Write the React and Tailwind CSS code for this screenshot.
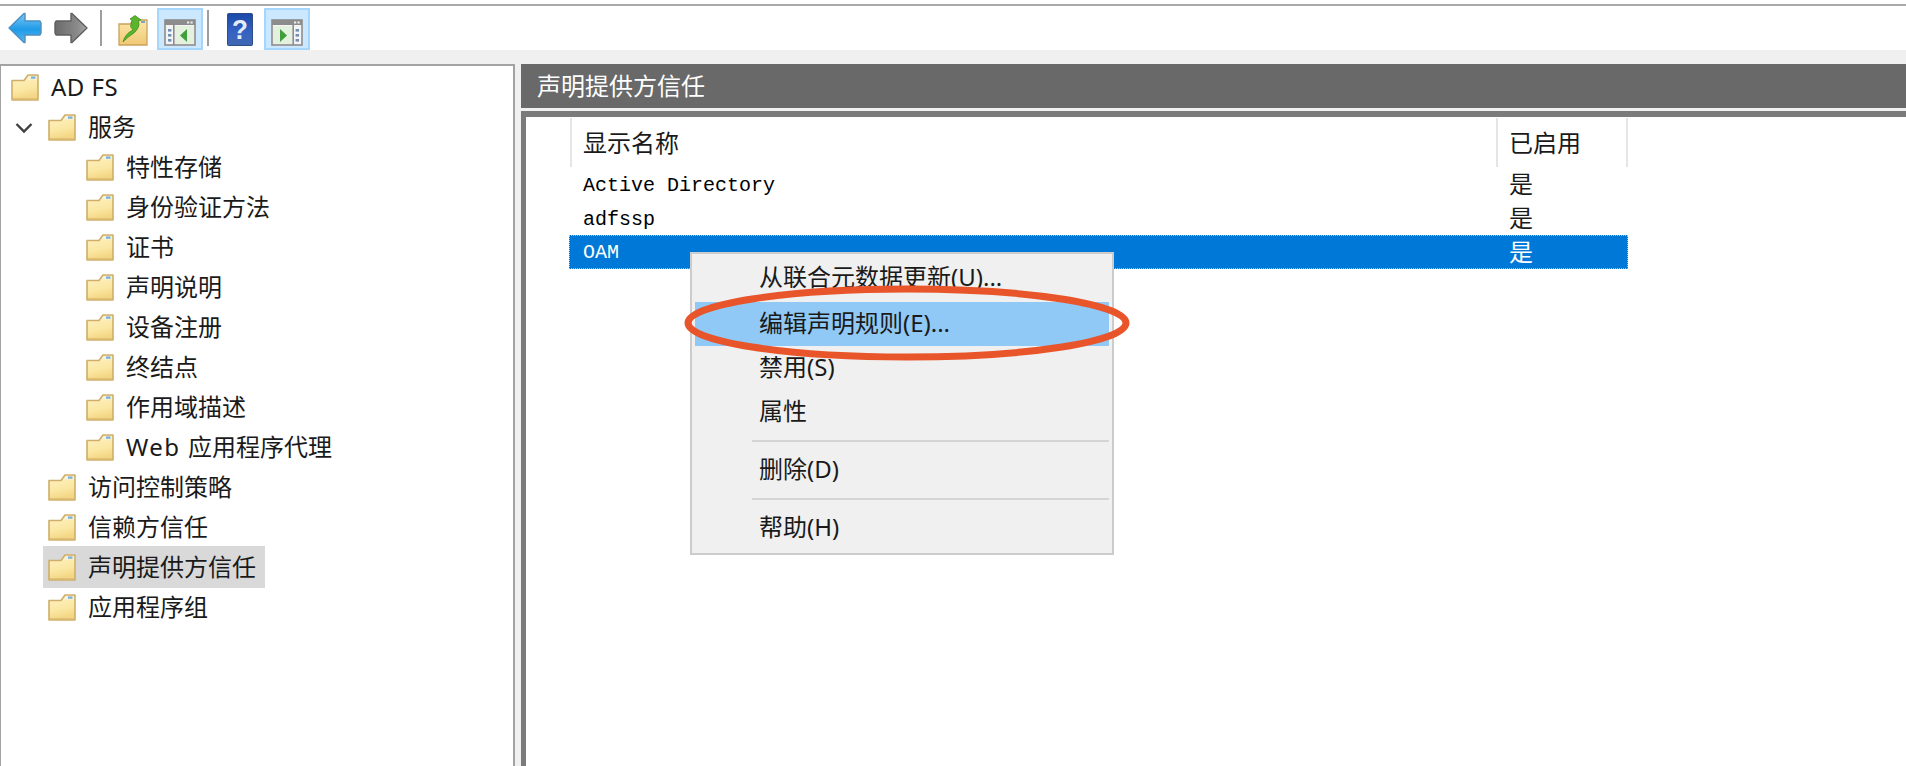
import React from "react";

const cjk = "font-['Noto_Sans','Noto_Sans_CJK_SC',sans-serif]";

function Folder() {
  return (
    <svg width="28" height="27" viewBox="0 0 28 27" className="shrink-0">
      <defs>
        <linearGradient id="fold" x1="0" y1="0" x2="0.25" y2="1">
          <stop offset="0" stopColor="#fdf3c4" />
          <stop offset="0.65" stopColor="#fbe7a3" />
          <stop offset="1" stopColor="#f3d583" />
        </linearGradient>
      </defs>
      <path d="M1 6.5 L13 6.5 L17 1 L27 1 L27 26 L1 26 Z" fill="url(#fold)" stroke="#cfae69" strokeWidth="1.6" strokeLinejoin="round" />
      <path d="M18 2 L26 2 L26 5.5 L15.5 5.5 Z" fill="#f6f1df" />
      <rect x="20" y="2.4" width="4.5" height="2.4" fill="#7fb3d8" />
      <path d="M2 25 L26 25" stroke="#d9b96f" strokeWidth="1.4" />
    </svg>
  );
}

function TreeRow({ level, label, selected, chevron }) {
  const pad = level === 0 ? "pl-[10px]" : level === 1 ? "pl-[47px]" : "pl-[85px]";
  return (
    <div className={`relative flex h-10 items-center ${pad}`}>
      {chevron && (
        <svg width="20" height="14" viewBox="0 0 20 14" className="absolute left-[13px] top-[14px]">
          <path d="M2.5 3 L10 10.5 L17.5 3" fill="none" stroke="#404040" strokeWidth="2.4" />
        </svg>
      )}
      <div className={`flex h-[42px] items-center gap-[12px] ${selected ? "-ml-[5px] bg-[#d9d9d9] pl-[5px] pr-[9px]" : ""}`}>
        <Folder />
        <span className="text-[24px] leading-none whitespace-nowrap text-[#1a1a1a]">{label}</span>
      </div>
    </div>
  );
}

function BackArrow() {
  return (
    <svg width="34" height="32" viewBox="0 0 34 32">
      <defs>
        <linearGradient id="back" x1="0" y1="0" x2="0" y2="1">
          <stop offset="0" stopColor="#7cc7f5" />
          <stop offset="0.55" stopColor="#1f9be8" />
          <stop offset="1" stopColor="#59b6ee" />
        </linearGradient>
      </defs>
      <path d="M1 16 L16 1.5 L17 1.5 L17 9 L32 9 L33 11 L33 21 L32 23 L17 23 L17 30.5 L16 30.5 Z" fill="url(#back)" stroke="#4c8fc0" strokeWidth="1.4" strokeLinejoin="round" />
    </svg>
  );
}

function ForwardArrow() {
  return (
    <svg width="34" height="32" viewBox="0 0 34 32">
      <defs>
        <linearGradient id="fwd" x1="0" y1="0" x2="1" y2="0">
          <stop offset="0" stopColor="#6b6b6b" />
          <stop offset="0.7" stopColor="#8a8a8a" />
          <stop offset="1" stopColor="#a8a8a8" />
        </linearGradient>
      </defs>
      <path d="M33 16 L18 1.5 L17 1.5 L17 9 L2 9 L1 11 L1 21 L2 23 L17 23 L17 30.5 L18 30.5 Z" fill="url(#fwd)" stroke="#5f5f5f" strokeWidth="1.4" strokeLinejoin="round" />
    </svg>
  );
}

function UpFolder() {
  return (
    <svg width="30" height="31" viewBox="0 0 30 31">
      <defs>
        <linearGradient id="upf" x1="0" y1="0" x2="0" y2="1">
          <stop offset="0" stopColor="#fbe7ab" />
          <stop offset="1" stopColor="#f0c874" />
        </linearGradient>
      </defs>
      <path d="M1 9 L12 9 L16 5 L29 5 L29 30 L1 30 Z" fill="url(#upf)" stroke="#c9a35b" strokeWidth="1.3" />
      <rect x="23" y="6" width="4" height="2" fill="#6fa8d0" />
      <path d="M5 27 C7 20 11 17 15 15 L12.5 11.5 L14 5 L12 4 L17 0.5 L23 5 L20.5 5.5 L21 10 C20 14 17 18 13 20 C10 22 7 25 5 27 Z" fill="#58b52c" stroke="#3f8f1e" strokeWidth="0.8" />
    </svg>
  );
}

function ConsolePane({ side }) {
  const left = side === "left";
  return (
    <svg width="32" height="27" viewBox="0 0 32 27">
      <rect x="1" y="1" width="30" height="25" fill="#f4f4f4" stroke="#8c8c8c" strokeWidth="1.6" />
      <rect x="1" y="1" width="30" height="5" fill="#8c8c8c" />
      <rect x="23" y="2.5" width="2.2" height="2" fill="#eeeeee" />
      <rect x="26.5" y="2.5" width="2.2" height="2" fill="#eeeeee" />
      {left ? (
        <g>
          <rect x="9" y="6" width="1.6" height="20" fill="#8c8c8c" />
          <rect x="4" y="10" width="3.4" height="2.6" fill="#6f90b4" />
          <rect x="4" y="15" width="3.4" height="2.6" fill="#6f90b4" />
          <rect x="4" y="20" width="3.4" height="2.6" fill="#6f90b4" />
          <rect x="11" y="7" width="19" height="18" fill="#e4f1df" />
          <path d="M23 10 L23 23 L16 16.5 Z" fill="#3f9f3a" />
        </g>
      ) : (
        <g>
          <rect x="21.4" y="6" width="1.6" height="20" fill="#8c8c8c" />
          <rect x="24.6" y="10" width="3.4" height="2.6" fill="#6f90b4" />
          <rect x="24.6" y="15" width="3.4" height="2.6" fill="#6f90b4" />
          <rect x="24.6" y="20" width="3.4" height="2.6" fill="#6f90b4" />
          <rect x="2" y="7" width="19" height="18" fill="#e4f1df" />
          <path d="M9 10 L9 23 L16 16.5 Z" fill="#3f9f3a" />
        </g>
      )}
    </svg>
  );
}

function HelpIcon() {
  return (
    <svg width="26" height="33" viewBox="0 0 27 33" preserveAspectRatio="none">
      <defs>
        <linearGradient id="hlp" x1="0" y1="0" x2="0" y2="1">
          <stop offset="0" stopColor="#1b48a8" />
          <stop offset="0.6" stopColor="#3564c4" />
          <stop offset="1" stopColor="#4068b0" />
        </linearGradient>
      </defs>
      <rect x="0.5" y="0.5" width="26" height="32" rx="1" fill="url(#hlp)" stroke="#2b4a86" />
      <text x="13.5" y="26" textAnchor="middle" fontFamily="Liberation Sans" fontWeight="700" fontSize="27" fill="#e6ecfa">?</text>
    </svg>
  );
}

function ToolButton({ children }) {
  return (
    <div className="flex h-[42px] w-[46px] items-end justify-center border-2 border-[#a6d6fb] bg-[#cce8ff] pb-[2px]">
      {children}
    </div>
  );
}

function Sep() {
  return <div className="h-[36px] w-[2px] bg-[#9e9e9e]" />;
}

function MenuItem({ label, active, extra = "" }) {
  return (
    <div className={`flex h-11 items-center pb-[2px] text-[24px] leading-none whitespace-nowrap text-[#1a1a1a] ${active ? "mx-[3px] pl-[64px] bg-[#90c8f6]" : "pl-[67px]"} ${extra}`}>
      {label}
    </div>
  );
}

function MenuSep() {
  return (
    <div className="flex h-[14px] items-center pl-[60px] pr-[3px]">
      <div className="h-[2px] w-full bg-[#d4d4d4]" />
    </div>
  );
}

const tree = [
  "特性存储",
  "身份验证方法",
  "证书",
  "声明说明",
  "设备注册",
  "终结点",
  "作用域描述",
];

export default function App() {
  return (
    <div className={`relative flex h-[766px] w-[1906px] flex-col overflow-hidden bg-white ${cjk}`}>
      {/* top rule */}
      <div className="h-1 bg-white" />
      <div className="h-[2px] bg-[#a9a9a9]" />

      {/* toolbar */}
      <div className="flex h-[44px] items-center bg-white pl-[8px]">
        <BackArrow />
        <div className="ml-[12px]"><ForwardArrow /></div>
        <div className="ml-[12px]"><Sep /></div>
        <div className="ml-[16px] mt-[4px]"><UpFolder /></div>
        <div className="ml-[9px] mt-[2px]"><ToolButton><ConsolePane side="left" /></ToolButton></div>
        <div className="ml-[4px]"><Sep /></div>
        <div className="ml-[18px] mt-[2px]"><HelpIcon /></div>
        <div className="ml-[11px] mt-[2px]"><ToolButton><ConsolePane side="right" /></ToolButton></div>
      </div>

      {/* content band */}
      <div className="flex min-h-0 flex-1 bg-[#f0f0f0] pt-[14px]">
        {/* tree pane */}
        <div className="h-full w-[515px] shrink-0 border-t-[2px] border-r-[2px] border-l border-[#a3a3a3] bg-white pt-[1px]">
          <TreeRow level={0} label={<span className="tracking-[0.5px]">AD FS</span>} />
          <TreeRow level={1} label="服务" chevron />
          {tree.map((t) => (
            <TreeRow key={t} level={2} label={t} />
          ))}
          <TreeRow level={2} label={<><span className="tracking-[1.4px]">Web </span>应用程序代理</>} />
          <TreeRow level={1} label="访问控制策略" />
          <TreeRow level={1} label="信赖方信任" />
          <TreeRow level={1} label="声明提供方信任" selected />
          <TreeRow level={1} label="应用程序组" />
        </div>

        {/* right pane */}
        <div className="ml-[6px] flex min-w-0 flex-1 flex-col bg-white">
          <div className="flex h-[44px] items-center bg-[#696969] pl-[16px] text-[24px] leading-none whitespace-nowrap text-white">
            声明提供方信任
          </div>
          <div className="h-[3px] bg-[#f0f0f0]" />
          <div className="min-h-0 flex-1 border-t-[6px] border-l-[5px] border-[#7b7b7b] bg-white pt-[1px] pl-[44px]">
            <div className="w-[1058px]">
              <div className="grid h-[49px] grid-cols-[926px_132px]">
                <div className="flex items-center border-l-2 border-[#e5e5e5] pl-[11px] text-[24px] leading-none text-[#1a1a1a]">显示名称</div>
                <div className="flex items-center border-x-2 border-[#e5e5e5] pl-[11px] text-[24px] leading-none text-[#1a1a1a]">已启用</div>
              </div>
              <div className="grid h-[34px] grid-cols-[926px_132px] items-center text-black">
                <div className="pt-[3px] pl-[13px] font-['Liberation_Mono',monospace] text-[20px] leading-none">Active Directory</div>
                <div className="pl-[13px] text-[24px] leading-none text-[#1a1a1a]">是</div>
              </div>
              <div className="grid h-[34px] grid-cols-[926px_132px] items-center text-black">
                <div className="pt-[3px] pl-[13px] font-['Liberation_Mono',monospace] text-[20px] leading-none">adfssp</div>
                <div className="pl-[13px] text-[24px] leading-none text-[#1a1a1a]">是</div>
              </div>
              <div className="-ml-[1px] grid h-[34px] grid-cols-[927px_132px] items-center border border-dotted border-[#d8b98a] bg-[#0078d7] text-white">
                <div className="pt-[1px] pl-[13px] font-['Liberation_Mono',monospace] text-[20px] leading-none">OAM</div>
                <div className="pl-[12px] text-[24px] leading-none">是</div>
              </div>
            </div>
          </div>
        </div>
      </div>

      {/* context menu */}
      <div className="absolute left-[690px] top-[252px] h-[303px] w-[424px] border-2 border-[#cccccc] bg-[#f0f0f0] pt-[2px]">
        <MenuItem label="从联合元数据更新(U)..." extra="mb-[2px]" />
        <MenuItem label="编辑声明规则(E)..." active />
        <MenuItem label="禁用(S)" />
        <MenuItem label="属性" />
        <MenuSep />
        <MenuItem label="删除(D)" />
        <MenuSep />
        <MenuItem label="帮助(H)" />
      </div>

      {/* annotation ellipse */}
      <svg className="absolute left-[680px] top-[282px]" width="454" height="82" viewBox="0 0 454 82">
        <ellipse cx="227" cy="41" rx="219" ry="34" fill="none" stroke="#e9552b" strokeWidth="7" />
      </svg>
    </div>
  );
}
